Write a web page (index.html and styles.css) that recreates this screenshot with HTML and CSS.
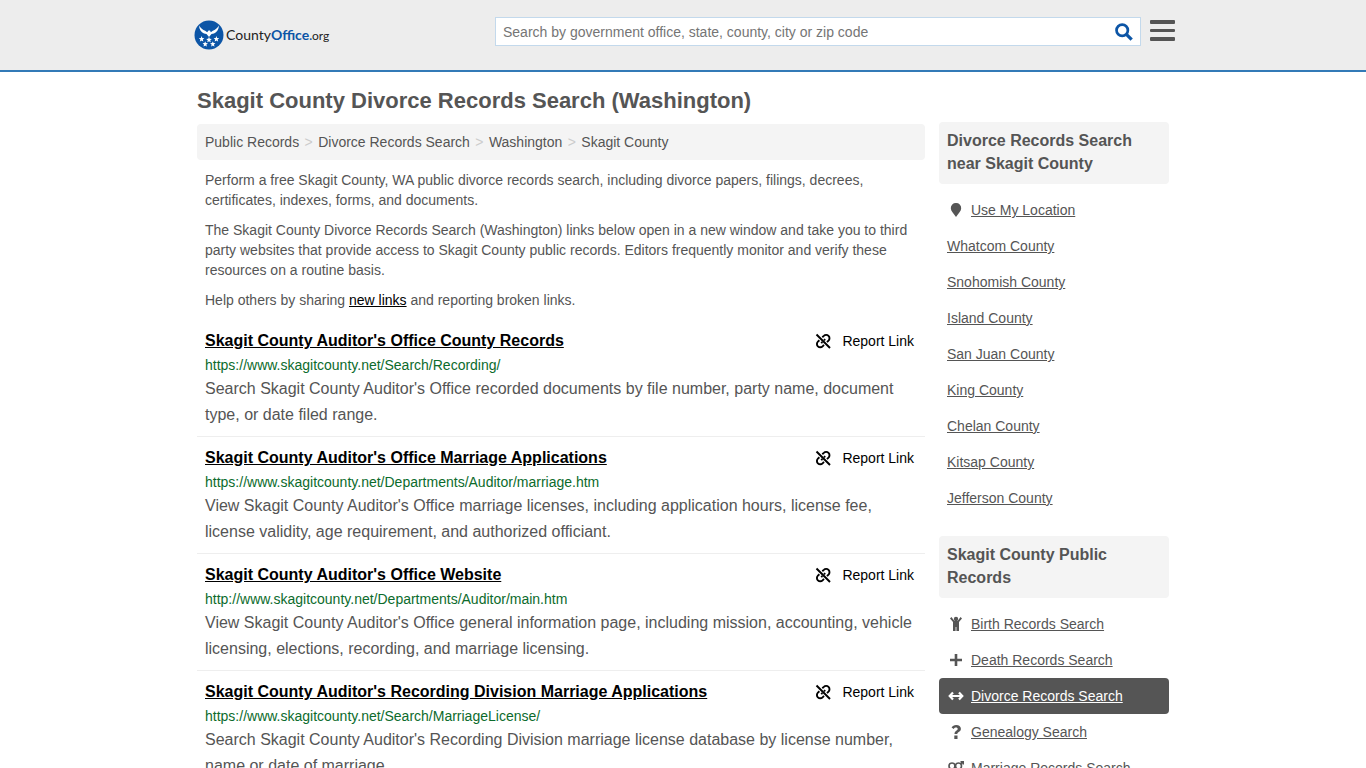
FILE: index.html
```html
<!DOCTYPE html>
<html lang="en">
<head>
<meta charset="utf-8">
<meta name="viewport" content="width=device-width, initial-scale=1">
<title>Skagit County Divorce Records Search (Washington)</title>
<link rel="stylesheet" href="styles.css">
</head>
<body>
<svg class="sprite" aria-hidden="true">
  <symbol id="unlink" viewBox="0 0 16 16">
    <g fill="none" stroke="currentColor" stroke-width="1.900">
      <path d="M1.500 1.500 15 15"/>
      <path d="M7.300 4.300 8.800 2.900a3.300 3.300 0 0 1 4.700 0a3.300 3.300 0 0 1 0 4.700L12 9.100"/>
      <path d="M9 11.900 7.600 13.300a3.300 3.300 0 0 1-4.700 0a3.300 3.300 0 0 1 0-4.700L4.400 7.200"/>
      <path d="M6.200 10.200 7.400 9M9 7.400 10.200 6.200"/>
    </g>
  </symbol>
  <symbol id="star" viewBox="0 0 10 10"><path fill="#fff" d="M5 0 6.300 3.400 10 3.700 7.100 6 8.100 9.700 5 7.600 1.900 9.700 2.900 6 0 3.700 3.700 3.400z"/></symbol>
</svg>

<header class="header">
  <div class="header-inner">
    <a class="logo" href="#" aria-label="CountyOffice.org">
      <svg class="logo-mark" viewBox="0 0 30 30" aria-hidden="true">
        <circle cx="15" cy="15" r="14.500" fill="#0c55a6"/>
        <path fill="#fff" d="M5 5.500c.3 4 2 6.500 5 8l2.500.6L15 17l2.500-2.900 2.500-.6c3-1.500 4.700-4 5-8-1.600 2.600-3.800 4.300-6.200 5.300l-2 1.400-.8-1.600-1.500-.2-1.300 1.800-2-1.400C8.800 9.800 6.600 8.100 5 5.500z"/>
        <use href="#star" x="4.700" y="16" width="5.800" height="5.800"/>
        <use href="#star" x="12.100" y="16.800" width="5.800" height="5.800"/>
        <use href="#star" x="19.500" y="16" width="5.800" height="5.800"/>
        <use href="#star" x="8.400" y="21.200" width="5.600" height="5.600"/>
        <use href="#star" x="16" y="21.200" width="5.600" height="5.600"/>
      </svg>
      <span class="logo-text">County<b>Office</b><small><b>.</b>org</small></span>
    </a>
    <form class="search" role="search">
      <input class="search-input" type="text" aria-label="Search" placeholder="Search by government office, state, county, city or zip code">
      <button class="search-button" type="button" aria-label="Submit search">
        <svg viewBox="0 0 20 20" width="18" height="18" aria-hidden="true"><circle cx="8" cy="8" r="6.300" fill="none" stroke="#0c55a6" stroke-width="3"/><path d="M12.700 12.700 18.500 18.500" stroke="#0c55a6" stroke-width="3.600"/></svg>
      </button>
    </form>
    <button class="menu" type="button" aria-label="Menu">
      <svg viewBox="0 0 25 22" width="25" height="22" aria-hidden="true"><path fill="#555" d="M1 0h23q1 0 1 1v2q0 1-1 1H1q-1 0-1-1V1q0-1 1-1zM1 9h23q1 0 1 1v1q0 1-1 1H1q-1 0-1-1v-1q0-1 1-1zM1 17h23q1 0 1 1v2q0 1-1 1H1q-1 0-1-1v-2q0-1 1-1z"/></svg>
    </button>
  </div>
</header>

<div class="page">
  <h1 class="page-title">Skagit County Divorce Records Search (Washington)</h1>
  <div class="columns">
    <main class="main">
      <nav class="breadcrumb" aria-label="Breadcrumb">
        <a href="#">Public Records</a><span class="sep">&gt;</span><a href="#">Divorce Records Search</a><span class="sep">&gt;</span><a href="#">Washington</a><span class="sep">&gt;</span><a href="#">Skagit County</a>
      </nav>
      <div class="intro">
        <p>Perform a free Skagit County, WA public divorce records search, including divorce papers, filings, decrees, certificates, indexes, forms, and documents.</p>
        <p>The Skagit County Divorce Records Search (Washington) links below open in a new window and take you to third party websites that provide access to Skagit County public records. Editors frequently monitor and verify these resources on a routine basis.</p>
        <p>Help others by sharing <a href="#">new links</a> and reporting broken links.</p>
      </div>
      <article class="result">
        <div class="result-head">
          <h2 class="result-title"><a href="#">Skagit County Auditor's Office County Records</a></h2>
          <button class="report" type="button"><svg class="report-icon" aria-hidden="true"><use href="#unlink"/></svg>Report Link</button>
        </div>
        <div class="result-url">https://www.skagitcounty.net/Search/Recording/</div>
        <p class="result-text">Search Skagit County Auditor's Office recorded documents by file number, party name, document type, or date filed range.</p>
      </article>
      <article class="result">
        <div class="result-head">
          <h2 class="result-title"><a href="#">Skagit County Auditor's Office Marriage Applications</a></h2>
          <button class="report" type="button"><svg class="report-icon" aria-hidden="true"><use href="#unlink"/></svg>Report Link</button>
        </div>
        <div class="result-url">https://www.skagitcounty.net/Departments/Auditor/marriage.htm</div>
        <p class="result-text">View Skagit County Auditor's Office marriage licenses, including application hours, license fee, license validity, age requirement, and authorized officiant.</p>
      </article>
      <article class="result">
        <div class="result-head">
          <h2 class="result-title"><a href="#">Skagit County Auditor's Office Website</a></h2>
          <button class="report" type="button"><svg class="report-icon" aria-hidden="true"><use href="#unlink"/></svg>Report Link</button>
        </div>
        <div class="result-url">http://www.skagitcounty.net/Departments/Auditor/main.htm</div>
        <p class="result-text">View Skagit County Auditor's Office general information page, including mission, accounting, vehicle licensing, elections, recording, and marriage licensing.</p>
      </article>
      <article class="result">
        <div class="result-head">
          <h2 class="result-title"><a href="#">Skagit County Auditor's Recording Division Marriage Applications</a></h2>
          <button class="report" type="button"><svg class="report-icon" aria-hidden="true"><use href="#unlink"/></svg>Report Link</button>
        </div>
        <div class="result-url">https://www.skagitcounty.net/Search/MarriageLicense/</div>
        <p class="result-text">Search Skagit County Auditor's Recording Division marriage license database by license number, name or date of marriage.</p>
      </article>
    </main>
    <aside class="side">
      <section>
        <h2 class="side-title">Divorce Records Search near Skagit County</h2>
        <ul class="side-list">
          <li><a href="#"><svg class="icon" viewBox="0 0 18 16" aria-hidden="true"><path d="M9 1a5 5 0 0 1 5.200 5.200C14.200 9 11 12 9 15 7 12 3.800 9 3.800 6.200A5 5 0 0 1 9 1z"/></svg><span>Use My Location</span></a></li>
          <li><a href="#"><span>Whatcom County</span></a></li>
          <li><a href="#"><span>Snohomish County</span></a></li>
          <li><a href="#"><span>Island County</span></a></li>
          <li><a href="#"><span>San Juan County</span></a></li>
          <li><a href="#"><span>King County</span></a></li>
          <li><a href="#"><span>Chelan County</span></a></li>
          <li><a href="#"><span>Kitsap County</span></a></li>
          <li><a href="#"><span>Jefferson County</span></a></li>
        </ul>
      </section>
      <section>
        <h2 class="side-title">Skagit County Public Records</h2>
        <ul class="side-list">
          <li><a href="#"><svg class="icon" viewBox="0 0 18 16" aria-hidden="true"><circle cx="9" cy="3" r="2.200"/><path d="M4.400 1 3 2.400 6 5.900V15h2.600v-4h.8v4H12V5.900l3-3.500L13.600 1 10.500 4.900h-3z"/></svg><span>Birth Records Search</span></a></li>
          <li><a href="#"><svg class="icon" viewBox="0 0 18 16" aria-hidden="true"><path d="M7.700 2h2.600v4.700H15v2.600h-4.700V14H7.700V9.300H3V6.700h4.700z"/></svg><span>Death Records Search</span></a></li>
          <li class="current"><a href="#" aria-current="page"><svg class="icon" viewBox="0 0 18 16" aria-hidden="true"><path fill="none" stroke="currentColor" stroke-width="2.200" d="M3 8h12M6 4.400 2.700 8 6 11.600M12 4.400 15.300 8 12 11.600"/></svg><span>Divorce Records Search</span></a></li>
          <li><a href="#"><svg class="icon" viewBox="0 0 18 16" aria-hidden="true"><path d="M4.600 3.500C5.500 2 7 1 9.200 1c2.800 0 4.700 1.500 4.700 3.700 0 3.300-3.600 3.100-3.600 5.300H7.500c0-3.300 3.200-3.400 3.200-5 0-.8-.6-1.400-1.700-1.400-1 0-1.600.5-2.300 1.400zM7.300 11.500h3.200V15H7.300z"/></svg><span>Genealogy Search</span></a></li>
          <li><a href="#"><svg class="icon" viewBox="0 0 18 16" aria-hidden="true"><g fill="none" stroke="currentColor" stroke-width="1.600"><circle cx="5" cy="6" r="3"/><circle cx="11.500" cy="6" r="3"/><path d="M5 9v6M2.800 12h4.400M13.600 4 16 1.800M13.500 1.800h2.700v2.700"/></g></svg><span>Marriage Records Search</span></a></li>
        </ul>
      </section>
    </aside>
  </div>
</div>
</body>
</html>
```
FILE: styles.css
```css
* { box-sizing: border-box; }
body {
  margin: 0;
  background: #fff;
  color: #555;
  font: 14px/20px "Liberation Sans", Arial, sans-serif;
}
h1, h2, p, ul { margin: 0; padding: 0; }
button { border: 0; padding: 0; background: none; font: inherit; color: inherit; cursor: pointer; }
.sprite { position: absolute; width: 0; height: 0; }

.header { background: #ededed; border-bottom: 2px solid #337ab7; }
.header-inner {
  display: flex;
  align-items: flex-start;
  max-width: 984px;
  margin: 0 auto;
  padding: 17px 0 20px 3px;
}
.logo { display: flex; align-items: center; gap: 2px; margin-top: 3px; color: #222; text-decoration: none; }
.logo-mark { width: 30px; height: 30px; }
.logo-text { font: 14px/20px Lato, "Liberation Sans", sans-serif; }
.logo-text b { color: #0c55a6; }
.logo-text small { font-size: 12px; }
.search {
  display: flex;
  flex: 0 1 646px;
  margin-left: auto;
  height: 29px;
  background: #fff;
  border: 1px solid #c3d9ec;
}
.search-input {
  flex: 1;
  min-width: 0;
  padding: 0 7px;
  border: 0;
  background: transparent;
  font: inherit;
  color: #555;
}
.search-input::placeholder { color: #757575; }
.search-button { display: flex; align-items: center; justify-content: center; width: 32px; }
.menu { display: flex; margin: 3px 0 0 9px; }

.page { max-width: 972px; margin: 0 auto; }
.page-title { padding: 15px 0 7px; font-size: 22px; line-height: 28px; }
.columns { display: flex; align-items: flex-start; gap: 14px; }
.main { flex: 1; min-width: 0; padding-top: 2px; }
.side { flex: 0 0 230px; }

.breadcrumb { display: flex; flex-wrap: wrap; padding: 8px; background: #f4f4f4; border-radius: 4px; }
.breadcrumb a { color: #555; text-decoration: none; }
.sep { width: 19px; text-align: center; color: #ccc; }

.intro { padding: 10px 8px; }
.intro p + p { margin-top: 10px; }
.intro a { color: #000; }

.result { padding: 8px; border-bottom: 1px solid #eee; }
.result-head { display: flex; justify-content: space-between; gap: 16px; }
.result-title { font-size: 16px; line-height: 26px; }
.result-title a { color: #000; }
.report { display: flex; align-items: center; color: #000; padding-right: 3px; }
.report-icon { width: 16px; height: 16px; margin-right: 11px; }
.result-url { line-height: 22px; color: #0c6b2c; }
.result-text { font-size: 16px; line-height: 26px; }

.side-title {
  padding: 7px 8px 9px;
  background: #f4f4f4;
  border-radius: 4px;
  font-size: 16px;
  line-height: 23px;
}
.side-list { list-style: none; padding: 8px 0 20px; }
.side-list a { display: flex; align-items: center; gap: 6px; padding: 8px; color: #555; text-decoration: none; }
.side-list span { text-decoration: underline; }
.icon { width: 18px; height: 16px; fill: currentColor; }
.current { background: #555; border-radius: 4px; }
.side-list .current a { color: #fff; }
```
